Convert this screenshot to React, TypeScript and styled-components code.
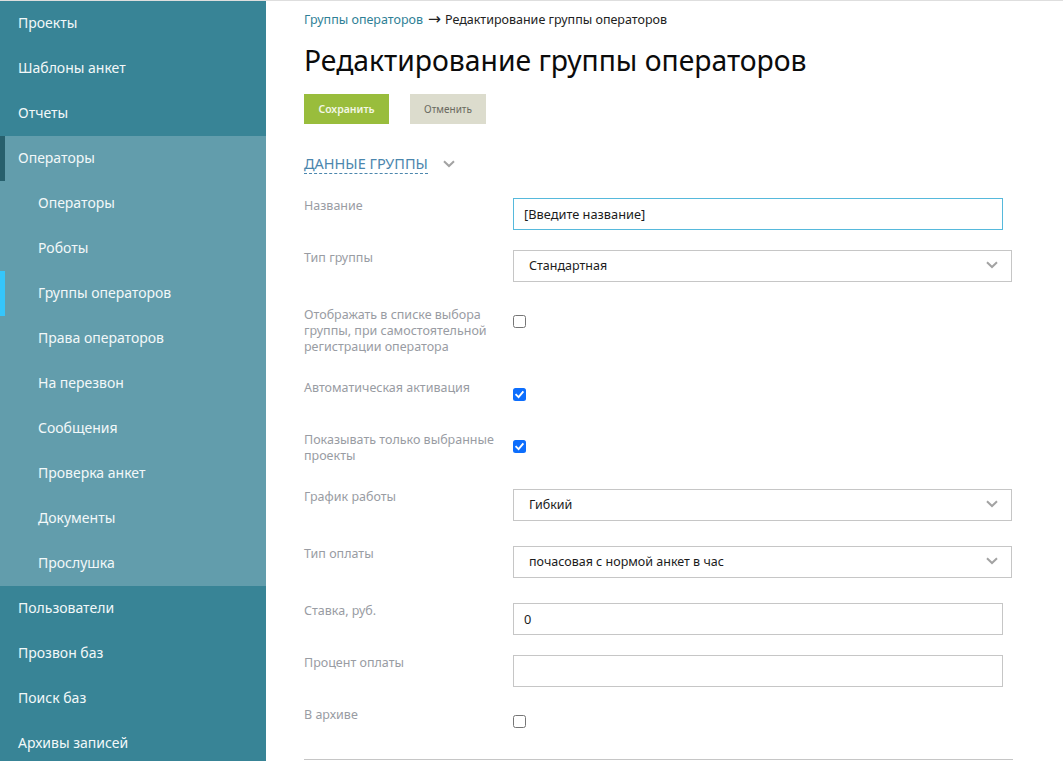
import React from 'react';
import styled, { createGlobalStyle } from 'styled-components';

const GlobalStyle = createGlobalStyle`
  html, body {
    margin: 0;
    padding: 0;
    height: 761px;
    overflow: hidden;
    background: #fff;
  }
  body {
    font-family: "Noto Sans", "Open Sans", sans-serif;
  }
  * {
    box-sizing: border-box;
  }
`;

const topItemsBefore = ['Проекты', 'Шаблоны анкет', 'Отчеты'];
const subItems = [
  'Операторы',
  'Роботы',
  'Группы операторов',
  'Права операторов',
  'На перезвон',
  'Сообщения',
  'Проверка анкет',
  'Документы',
  'Прослушка',
];
const topItemsAfter = ['Пользователи', 'Прозвон баз', 'Поиск баз', 'Архивы записей'];

const Chevron: React.FC = () => (
  <svg width="12" height="8" viewBox="0 0 12 8" aria-hidden="true">
    <path d="M1 1.2 L6 6 L11 1.2" fill="none" stroke="#a3a3a3" strokeWidth="2" />
  </svg>
);

const Check: React.FC = () => (
  <svg width="13" height="13" viewBox="0 0 20 20" aria-hidden="true">
    <path d="M5 10.5 L8.6 14 L15 6.5" fill="none" stroke="#fff" strokeWidth="3" strokeLinecap="square" />
  </svg>
);

const App: React.FC = () => (
  <>
    <GlobalStyle />
    <Page>
      <Sidebar>
        {topItemsBefore.map((item) => (
          <NavItem key={item}>{item}</NavItem>
        ))}
        <NavGroup>
          <NavItem $marker="#27606d">Операторы</NavItem>
          {subItems.map((item) => (
            <NavItem key={item} $sub $marker={item === 'Группы операторов' ? '#35c6fb' : undefined}>
              {item}
            </NavItem>
          ))}
        </NavGroup>
        {topItemsAfter.map((item) => (
          <NavItem key={item}>{item}</NavItem>
        ))}
      </Sidebar>
      <Main>
        <Breadcrumbs>
          <BreadcrumbLink>Группы операторов</BreadcrumbLink>
          <BreadcrumbArrow>→</BreadcrumbArrow>
          Редактирование группы операторов
        </Breadcrumbs>
        <Title>Редактирование группы операторов</Title>
        <Actions>
          <SaveButton>Сохранить</SaveButton>
          <CancelButton>Отменить</CancelButton>
        </Actions>
        <SectionHeader>
          <SectionTitle>ДАННЫЕ ГРУППЫ</SectionTitle>
          <Chevron />
        </SectionHeader>
        <Form>
          <Row $height={52}>
            <Label>Название</Label>
            <TextBox $focused>[Введите название]</TextBox>
          </Row>
          <Row $height={56}>
            <Label>Тип группы</Label>
            <SelectBox>
              Стандартная
              <Chevron />
            </SelectBox>
          </Row>
          <Row $height={74}>
            <Label $offset={1}>Отображать в списке выбора группы, при самостоятельной регистрации оператора</Label>
            <CheckBox $offset={9} />
          </Row>
          <Row $height={52}>
            <Label>Автоматическая активация</Label>
            <CheckBox $checked $offset={8}>
              <Check />
            </CheckBox>
          </Row>
          <Row $height={57}>
            <Label>Показывать только выбранные проекты</Label>
            <CheckBox $checked $offset={8}>
              <Check />
            </CheckBox>
          </Row>
          <Row $height={57}>
            <Label>График работы</Label>
            <SelectBox>
              Гибкий
              <Chevron />
            </SelectBox>
          </Row>
          <Row $height={57}>
            <Label>Тип оплаты</Label>
            <SelectBox>
              почасовая с нормой анкет в час
              <Chevron />
            </SelectBox>
          </Row>
          <Row $height={52}>
            <Label>Ставка, руб.</Label>
            <TextBox>0</TextBox>
          </Row>
          <Row $height={52}>
            <Label>Процент оплаты</Label>
            <TextBox />
          </Row>
          <Row $height={52}>
            <Label>В архиве</Label>
            <CheckBox $offset={8} />
          </Row>
        </Form>
        <Divider />
      </Main>
    </Page>
  </>
);

const Page = styled.div`
  display: flex;
  height: 761px;
  overflow: hidden;
  border-top: 1px solid #dedede;
`;

const Sidebar = styled.nav`
  width: 266px;
  flex-shrink: 0;
  background: #388496;
`;

const NavGroup = styled.div`
  background: #629dac;
`;

const NavItem = styled.div<{ $sub?: boolean; $marker?: string }>`
  height: 45px;
  display: flex;
  align-items: center;
  padding-left: ${({ $sub }) => ($sub ? 38 : 18)}px;
  padding-bottom: 2px;
  box-shadow: ${({ $marker }) => ($marker ? `inset 5px 0 0 ${$marker}` : 'none')};
  font-size: 14px;
  color: #f2f8f9;
`;

const Main = styled.main`
  flex: 1;
  padding: 0 0 0 38px;
`;

const Breadcrumbs = styled.div`
  padding-top: 10px;
  height: 31px;
  font-size: 12.5px;
  line-height: 17px;
  white-space: nowrap;
  color: #222;
`;

const BreadcrumbLink = styled.span`
  color: #2f7f96;
`;

const BreadcrumbArrow = styled.span`
  margin: 0 4px 0 5px;
  font-family: "DejaVu Sans", sans-serif;
  font-size: 15.5px;
  line-height: 17px;
`;

const Title = styled.h1`
  margin: 0;
  height: 62px;
  font-size: 28.3px;
  font-weight: 400;
  line-height: 56px;
  color: #0b0b0b;
`;

const Actions = styled.div`
  display: flex;
  gap: 21px;
`;

const Button = styled.div`
  height: 30px;
  display: flex;
  align-items: center;
  justify-content: center;
`;

const SaveButton = styled(Button)`
  width: 85px;
  font-size: 10.5px;
  background: #99bd3c;
  color: #f3f7e6;
  font-weight: 600;
`;

const CancelButton = styled(Button)`
  width: 76px;
  font-size: 10px;
  background: #dcdccd;
  color: #6a6a60;
`;

const SectionHeader = styled.div`
  display: flex;
  align-items: center;
  gap: 15px;
  height: 74px;
  padding-top: 5px;
`;

const SectionTitle = styled.span`
  font-size: 14.5px;
  line-height: 19px;
  color: #4b86ad;
  border-bottom: 1px dashed #4b86ad;
`;

const Form = styled.div`
  display: flex;
  flex-direction: column;
`;

const Row = styled.div<{ $height: number }>`
  display: grid;
  grid-template-columns: 209px 1fr;
  align-items: start;
  height: ${({ $height }) => $height}px;
`;

const Label = styled.div<{ $offset?: number }>`
  width: 194px;
  margin-top: ${({ $offset }) => $offset ?? 0}px;
  font-size: 12.5px;
  line-height: 16px;
  color: #999ca3;
`;

const TextBox = styled.div<{ $focused?: boolean }>`
  width: 490px;
  height: 32px;
  display: flex;
  align-items: center;
  padding-left: 10px;
  font-size: 12.8px;
  color: #1c1c1c;
  border: 1px solid ${({ $focused }) => ($focused ? '#56b9dc' : '#c6c6c6')};
`;

const SelectBox = styled.div`
  width: 499px;
  height: 32px;
  display: flex;
  align-items: center;
  justify-content: space-between;
  padding: 0 13px 2px 15px;
  font-size: 12.5px;
  color: #1c1c1c;
  border: 1px solid #c6c6c6;
`;

const CheckBox = styled.div<{ $checked?: boolean; $offset: number }>`
  width: 13px;
  height: 13px;
  margin-top: ${({ $offset }) => $offset}px;
  display: flex;
  align-items: center;
  justify-content: center;
  border-radius: 2.5px;
  background: ${({ $checked }) => ($checked ? '#0d6efd' : '#fff')};
  border: ${({ $checked }) => ($checked ? '0' : '1px solid #767676')};
`;

const Divider = styled.div`
  width: 709px;
  height: 1px;
  background: #c6c6c6;
`;

export default App;
